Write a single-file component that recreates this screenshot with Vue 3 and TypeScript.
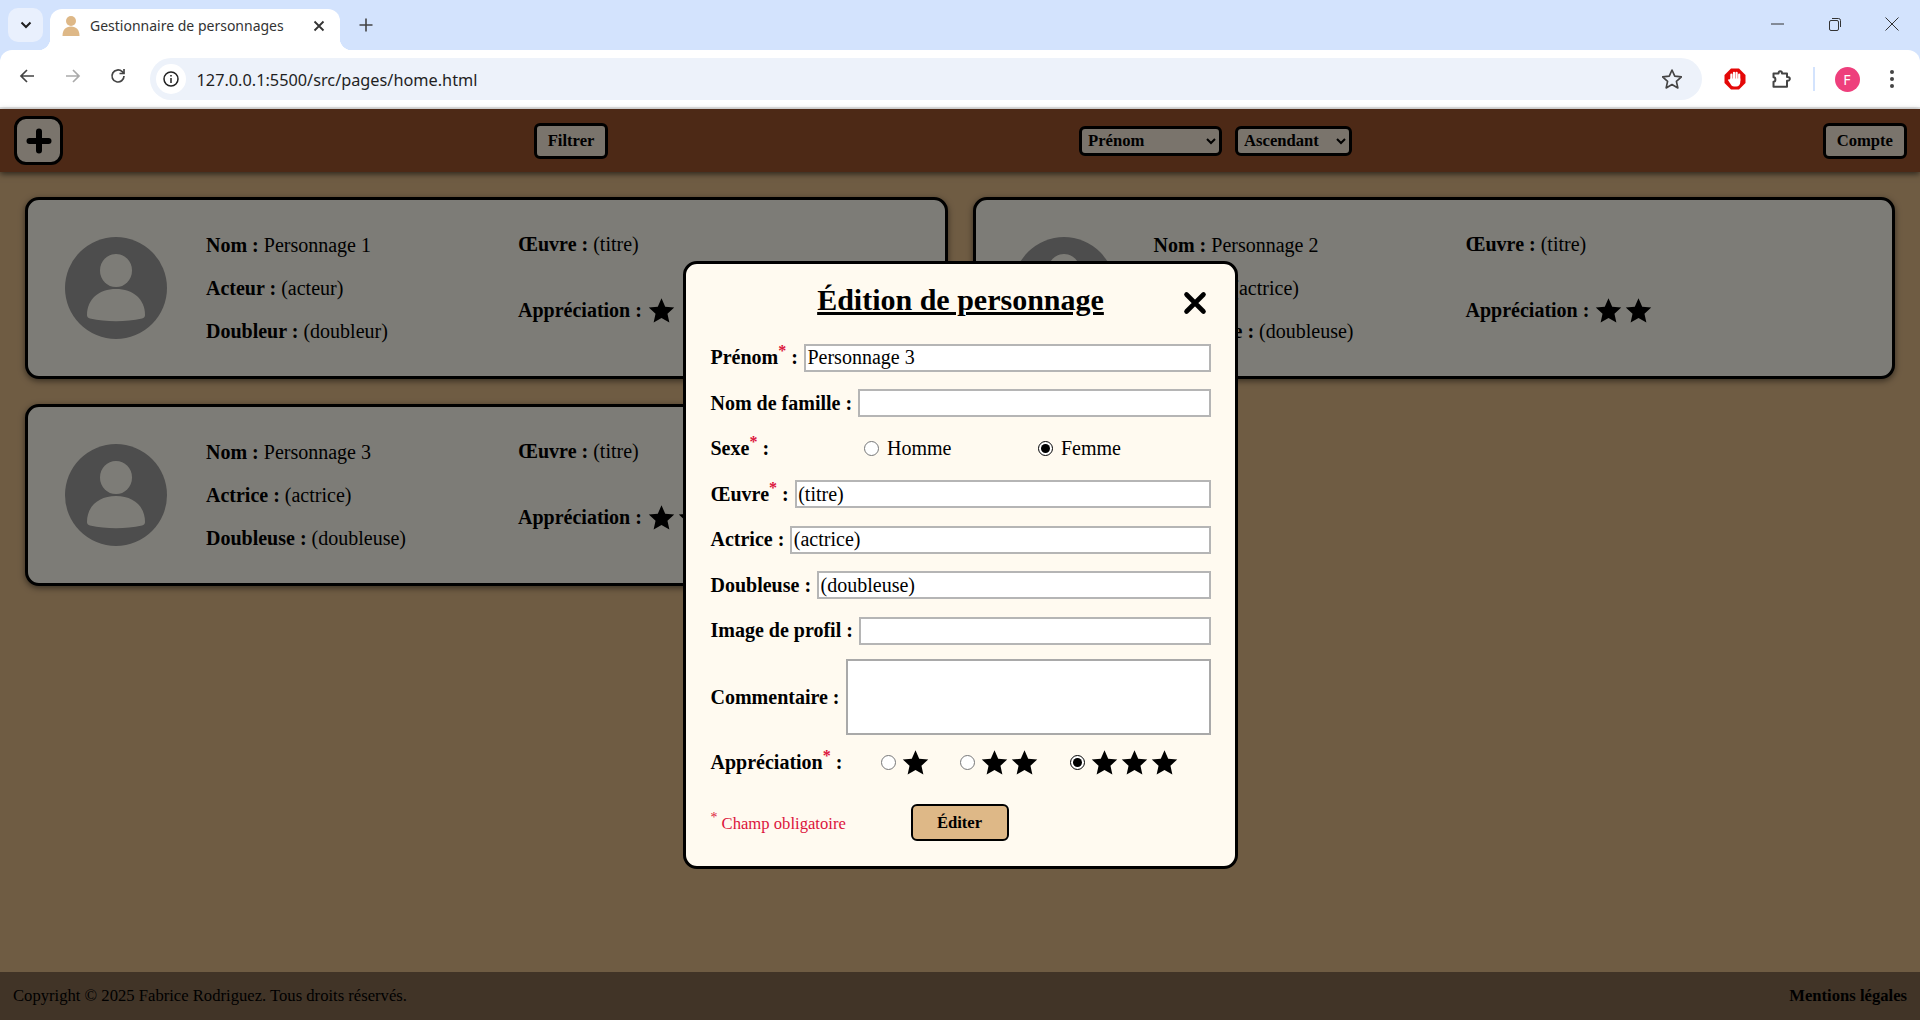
<script setup lang="ts">
interface Character {
  name: string;
  roleLabel: string;
  role: string;
  voiceLabel: string;
  voice: string;
  stars: number;
}

const characters: Character[] = [
  { name: "Personnage 1", roleLabel: "Acteur", role: "(acteur)", voiceLabel: "Doubleur", voice: "(doubleur)", stars: 1 },
  { name: "Personnage 2", roleLabel: "Actrice", role: "(actrice)", voiceLabel: "Doubleuse", voice: "(doubleuse)", stars: 2 },
  { name: "Personnage 3", roleLabel: "Actrice", role: "(actrice)", voiceLabel: "Doubleuse", voice: "(doubleuse)", stars: 2 },
];

const starPath = "M12 1.2l3.300 7.400 8 .8-6 5.400 1.700 7.900-7-4.100-7 4.100 1.700-7.900-6-5.400 8-.8z";
const ratings = [1, 2, 3];
</script>

<template>
  <div class="chrome">
    <div class="tabstrip">
      <button type="button" class="tab-search">
        <svg width="14" height="14" viewBox="0 0 14 14"><path d="M2.500 4.500 7 9l4.500-4.500" fill="none" stroke="#1f1f1f" stroke-width="2" /></svg>
      </button>
      <div class="tab">
        <svg class="favicon" width="20" height="22" viewBox="0 0 20 22">
          <circle cx="10" cy="6" r="5" fill="#deb887" />
          <path d="M1.500 21c0-6 3-9.500 8.500-9.500s8.500 3.500 8.500 9.500z" fill="#deb887" />
        </svg>
        <span class="tab-title">Gestionnaire de personnages</span>
        <svg class="tab-close" width="12" height="12" viewBox="0 0 12 12"><path d="M1.500 1.500l9 9m0-9l-9 9" stroke="#333" stroke-width="1.800" /></svg>
      </div>
      <svg class="new-tab" width="14" height="14" viewBox="0 0 14 14"><path d="M7 .5v13M.5 7h13" stroke="#444" stroke-width="1.600" /></svg>
      <div class="window-controls">
        <svg width="14" height="14" viewBox="0 0 14 14"><path d="M0 7h13" stroke="#333" stroke-width="1" /></svg>
        <svg width="14" height="14" viewBox="0 0 14 14" fill="none" stroke="#333"><rect x="1.500" y="3.500" width="9" height="10" rx="1.500" /><path d="M4 1.500h6.500a2 2 0 0 1 2 2V10" /></svg>
        <svg width="14" height="14" viewBox="0 0 14 14"><path d="M.5.500l13 13m0-13l-13 13" stroke="#333" stroke-width="1" /></svg>
      </div>
    </div>
    <div class="toolbar">
      <svg width="18" height="18" viewBox="0 0 18 18" fill="none" stroke="#444" stroke-width="1.700"><path d="M16 9H3M9 3 3 9l6 6" /></svg>
      <svg width="18" height="18" viewBox="0 0 18 18" fill="none" stroke="#aaa" stroke-width="1.700"><path d="M2 9h13M9 3l6 6-6 6" /></svg>
      <svg width="18" height="18" viewBox="0 0 18 18" fill="none" stroke="#444" stroke-width="1.700"><path d="M15 9a6 6 0 1 1-1.800-4.300L15 6.500" /><path d="M15 2v4.500h-4.500" /></svg>
      <div class="omnibox">
        <span class="site-info">
          <svg width="18" height="18" viewBox="0 0 18 18" fill="none" stroke="#222" stroke-width="1.500"><circle cx="9" cy="9" r="7" /><path d="M9 8v5M9 5v1.500" /></svg>
        </span>
        <span class="url">127.0.0.1:5500/src/pages/home.html</span>
        <svg class="bookmark" width="20" height="20" viewBox="0 0 24 24" fill="none" stroke="#444" stroke-width="2"><path :d="starPath" stroke-linejoin="round" /></svg>
      </div>
      <div class="extensions">
        <svg class="ext-block" width="22" height="22" viewBox="0 0 22 22">
          <path d="M7 .5h8L21.500 7v8L15 21.500H7L.5 15V7z" fill="#e40808" />
          <path d="M7.400 6.500v6M10 4.800v6M12.600 4.800v6M15.200 6.500v6" stroke="#fff" stroke-width="2.200" stroke-linecap="round" />
          <path d="M6.300 10.500h10v3.500c0 2.500-1.500 4.500-4 4.500H10c-1.500 0-2.500-.8-3.300-2.200L4.200 12.500c-.5-1 .8-1.800 1.500-1z" fill="#fff" />
        </svg>
        <svg class="ext-puzzle" width="22" height="22" viewBox="0 0 22 22" fill="none" stroke="#444" stroke-width="2" stroke-linejoin="round"><path d="M3.500 5.500h5c0-3 3.500-3 3.500 0h5V9c2.500-.5 3 1.500 2.700 2.500-.3 1-1.200 1.500-2.700 1.300v6H3.500v-5c2.500 0 2.500-4.500 0-4.500z" /></svg>
        <span class="divider"></span>
        <span class="profile">F</span>
        <svg class="ext-menu" width="6" height="20" viewBox="0 0 6 20" fill="#444"><circle cx="3" cy="3" r="2" /><circle cx="3" cy="10" r="2" /><circle cx="3" cy="17" r="2" /></svg>
      </div>
    </div>
  </div>

  <div class="page">
    <header class="app-header">
      <button type="button" class="add-btn" aria-label="Ajouter">
        <svg width="30" height="30" viewBox="0 0 30 30"><path d="M15 5.500v19M5.500 15h19" stroke="#000" stroke-width="6" stroke-linecap="round" /></svg>
      </button>
      <button type="button" class="btn">Filtrer</button>
      <div class="sorters">
        <select class="sort sort-name">
          <option>Prénom</option>
        </select>
        <select class="sort sort-order">
          <option>Ascendant</option>
        </select>
      </div>
      <button type="button" class="btn">Compte</button>
    </header>

    <main class="cards">
      <article v-for="c in characters" :key="c.name" class="card">
        <svg class="avatar" width="102" height="102" viewBox="0 0 102 102">
          <circle cx="51" cy="51" r="51" fill="#9a9a9a" />
          <ellipse cx="51" cy="33.500" rx="16" ry="16.500" fill="#fbf9ee" />
          <path d="M22 78C22 62 34 52 51 52s29 10 29 26c0 2-1 3-3 3.500-17 3.500-35 3.500-52 0-2-.5-3-1.500-3-3.500z" fill="#fbf9ee" />
        </svg>
        <div class="col col-identity">
          <p><b>Nom :</b> {{ c.name }}</p>
          <p><b>{{ c.roleLabel }} :</b> {{ c.role }}</p>
          <p><b>{{ c.voiceLabel }} :</b> {{ c.voice }}</p>
        </div>
        <div class="col col-work">
          <p><b>Œuvre :</b> (titre)</p>
          <p class="rating">
            <b>Appréciation :</b>
            <svg v-for="n in c.stars" :key="n" class="star" width="27" height="27" viewBox="0 0 24 24"><path :d="starPath" /></svg>
          </p>
        </div>
      </article>
    </main>

    <footer class="app-footer">
      <span>Copyright © 2025 Fabrice Rodriguez. Tous droits réservés.</span>
      <b>Mentions légales</b>
    </footer>

    <div class="overlay">
      <form class="modal" @submit.prevent>
        <div class="modal-head">
          <h2>Édition de personnage</h2>
          <svg class="close" width="24" height="24" viewBox="0 0 24 24"><path d="M3.500 3.500l17 17m0-17l-17 17" stroke="#000" stroke-width="4.600" stroke-linecap="round" /></svg>
        </div>

        <label class="row">
          <b>Prénom<sup>*</sup> :</b>
          <input type="text" value="Personnage 3" />
        </label>
        <label class="row">
          <b>Nom de famille :</b>
          <input type="text" />
        </label>
        <div class="row row-radio">
          <b class="sex-label">Sexe<sup>*</sup> :</b>
          <label class="radio sex-m"><input type="radio" name="sex" /> Homme</label>
          <label class="radio"><input type="radio" name="sex" checked /> Femme</label>
        </div>
        <label class="row">
          <b>Œuvre<sup>*</sup> :</b>
          <input type="text" value="(titre)" />
        </label>
        <label class="row">
          <b>Actrice :</b>
          <input type="text" value="(actrice)" />
        </label>
        <label class="row">
          <b>Doubleuse :</b>
          <input type="text" value="(doubleuse)" />
        </label>
        <label class="row">
          <b>Image de profil :</b>
          <input type="text" />
        </label>
        <label class="row row-area">
          <b>Commentaire :</b>
          <textarea></textarea>
        </label>
        <div class="row row-stars">
          <b class="rate-label">Appréciation<sup>*</sup> :</b>
          <label v-for="r in ratings" :key="r" class="radio rate">
            <input type="radio" name="rate" :checked="r === 3" />
            <svg v-for="n in r" :key="n" class="star" width="27" height="27" viewBox="0 0 24 24"><path :d="starPath" /></svg>
          </label>
        </div>
        <div class="modal-foot">
          <span class="required"><sup>*</sup> Champ obligatoire</span>
          <button type="submit" class="submit">Éditer</button>
        </div>
      </form>
    </div>
  </div>
</template>

<style>
html,
body {
  margin: 0;
  height: 100%;
  overflow: hidden;
}
</style>

<style scoped>
.chrome {
  height: 109px;
  display: flex;
  flex-direction: column;
  font-family: "Noto Sans", sans-serif;
  background: #d3e3fd;
}

.tabstrip {
  height: 50px;
  display: flex;
  align-items: flex-end;
  padding-left: 8px;
}

.tab-search {
  width: 35px;
  height: 34px;
  margin-bottom: 8px;
  padding: 0;
  display: flex;
  align-items: center;
  justify-content: center;
  border: 0;
  border-radius: 10px;
  background: #e9f0fd;
}

.tab {
  position: relative;
  width: 290px;
  height: 41px;
  margin-left: 7px;
  padding: 0 15px 8px 11px;
  box-sizing: border-box;
  display: flex;
  align-items: center;
  border-radius: 12px 12px 0 0;
  background: #fff;
}

.tab::before,
.tab::after {
  content: "";
  position: absolute;
  bottom: 0;
  width: 12px;
  height: 12px;
}

.tab::before {
  left: -12px;
  background: radial-gradient(circle at 0 0, transparent 12px, #fff 12.500px);
}

.tab::after {
  right: -12px;
  background: radial-gradient(circle at 100% 0, transparent 12px, #fff 12.500px);
}

.favicon {
  flex: none;
}

.tab-title {
  flex: 1;
  margin-left: 9px;
  color: #333;
  font-size: 14px;
  white-space: nowrap;
}

.tab-close {
  flex: none;
}

.new-tab {
  margin: 0 0 18px 19px;
}

.window-controls {
  margin-left: auto;
  margin-bottom: 19px;
  padding-right: 21px;
  display: flex;
  gap: 43px;
}

.toolbar {
  position: relative;
  height: 59px;
  box-sizing: border-box;
  padding: 8px 0 7px 18px;
  display: flex;
  align-items: flex-start;
  gap: 27.500px;
  border-bottom: 2px solid #e8e8e8;
  border-radius: 12px 12px 0 0;
  background: #fff;
}

.toolbar > svg {
  margin-top: 9px;
}

.omnibox {
  width: 1552px;
  height: 42px;
  margin-left: -5px;
  padding: 0 20px 0 6px;
  box-sizing: border-box;
  display: flex;
  align-items: center;
  border-radius: 21px;
  background: #edf2fa;
}

.site-info {
  width: 30px;
  height: 30px;
  display: flex;
  align-items: center;
  justify-content: center;
  border-radius: 50%;
  background: #fff;
}

.url {
  margin-left: 11px;
  padding-top: 1px;
  color: #1f1f1f;
  font-size: 16.300px;
}

.bookmark {
  margin-left: auto;
}

.extensions {
  margin-left: -5.500px;
  display: flex;
  align-items: center;
  height: 42px;
}

.ext-puzzle {
  margin-left: 24px;
}

.divider {
  width: 2px;
  height: 24px;
  margin: 0 20px 0 21px;
  background: #d3e3fd;
}

.profile {
  width: 25px;
  height: 25px;
  display: flex;
  align-items: center;
  justify-content: center;
  border-radius: 50%;
  background: #ee3f7c;
  color: #fff;
  font-size: 14px;
}

.ext-menu {
  margin-left: 29px;
}

.page {
  position: relative;
  height: 911px;
  display: flex;
  flex-direction: column;
  background: #deb887;
  font-family: "Liberation Serif", serif;
  color: #000;
  font-size: 20px;
}

.app-header {
  height: 63px;
  flex: none;
  box-sizing: border-box;
  padding: 0 13px 0 14px;
  display: flex;
  align-items: center;
  justify-content: space-between;
  background: #9b532c;
  box-shadow: 0 2px 6px rgba(0, 0, 0, 0.6);
}

.add-btn {
  width: 49px;
  height: 49px;
  padding: 0;
  display: flex;
  align-items: center;
  justify-content: center;
  border: 3px solid #000;
  border-radius: 12px;
  background: #f4e8d8;
}

.btn {
  height: 36px;
  padding: 0 11px;
  border: 3px solid #000;
  border-radius: 6px;
  background: #f4e8d8;
  font: bold 16.640px "Liberation Serif", serif;
}

.sorters {
  display: flex;
  gap: 13px;
}

.sort {
  height: 30px;
  padding: 0 3px 0 2px;
  border: 3px solid #000;
  border-radius: 6px;
  background: #f4e8d8;
  font: bold 16.640px "Liberation Serif", serif;
}

.sort-name {
  width: 143px;
}

.sort-order {
  width: 117px;
}

.cards {
  flex: 1;
  padding: 25px 25px 0;
  display: grid;
  grid-template-columns: repeat(2, 1fr);
  grid-auto-rows: 182px;
  align-content: start;
  column-gap: 25px;
  row-gap: 25px;
}

.card {
  box-sizing: border-box;
  padding-left: 37px;
  display: flex;
  align-items: center;
  border: 3px solid #000;
  border-radius: 14px;
  background: #fbf9ee;
  box-shadow: 0 2px 6px rgba(0, 0, 0, 0.5);
}

.avatar {
  flex: none;
}

.col p {
  margin: 0;
}

.col-identity {
  width: 312px;
  margin-left: 39px;
  display: flex;
  flex-direction: column;
  gap: 20px;
}

.col-identity p,
.col-work > p:first-child {
  line-height: 23px;
}

.col-work {
  display: flex;
  flex-direction: column;
  gap: 39px;
  margin-bottom: 18px;
}

.rating {
  display: flex;
  align-items: center;
  gap: 3px;
  height: 30px;
}

.rating b {
  margin-right: 3px;
}

.star {
  display: block;
  flex: none;
}

.app-footer {
  height: 48px;
  flex: none;
  box-sizing: border-box;
  padding: 0 13px;
  display: flex;
  align-items: center;
  justify-content: space-between;
  background: #82684f;
  font-size: 16.640px;
}

.overlay {
  position: absolute;
  inset: 0;
  display: flex;
  align-items: center;
  justify-content: center;
  background: rgba(0, 0, 0, 0.5);
}

.modal {
  width: 555px;
  box-sizing: border-box;
  padding: 15px 24px 25px 25px;
  display: flex;
  flex-direction: column;
  border: 3px solid #000;
  border-radius: 14px;
  background: #fffaf0;
}

.modal-head {
  position: relative;
  height: 65px;
  text-align: center;
}

.modal-head h2 {
  margin: 1px 0 0;
  font-size: 30px;
  line-height: 40px;
  text-decoration: underline;
}

.close {
  position: absolute;
  top: 12px;
  right: 3.500px;
}

.row {
  height: 28px;
  margin-bottom: 17.500px;
  display: flex;
  align-items: center;
  gap: 6px;
}

.row b {
  white-space: nowrap;
}

.row sup {
  color: #dc143c;
  font-size: 16px;
  line-height: 0;
}

.row > input {
  flex: 1;
  min-width: 0;
  height: 28px;
  box-sizing: border-box;
  padding: 1px 1.500px;
  border: 2px solid #b5b5b5;
  background: #fff;
  font: 20px "Liberation Serif", serif;
}

.row-area {
  height: 76px;
  margin-top: -3.500px;
  margin-bottom: 10px;
}

.row-area b {
  padding-top: 2px;
}

textarea {
  flex: 1;
  height: 76px;
  box-sizing: border-box;
  border: 2px solid #a9a9a9;
  background: #fff;
  resize: none;
}

.radio {
  display: flex;
  align-items: center;
  gap: 4px;
}

.radio input {
  width: 15px;
  height: 15px;
  margin: 0 4px 0 0;
  accent-color: #000;
}

.sex-label {
  width: 147.500px;
}

.sex-m {
  width: 168px;
}

.row-stars {
  height: 36px;
  margin-bottom: 24px;
  gap: 0;
}

.rate-label {
  width: 170px;
}

.rate {
  gap: 3px;
  margin-right: 31.500px;
}

.rate input {
  margin-right: 3px;
}

.modal-foot {
  height: 36px;
  display: flex;
  align-items: center;
}

.required {
  width: 200px;
  padding-top: 3px;
  color: #dc143c;
  font-size: 16.640px;
}

.required sup {
  line-height: 0;
}

.submit {
  width: 98px;
  height: 37px;
  padding: 0;
  flex: none;
  border: 2px solid #000;
  border-radius: 6px;
  background: #deb887;
  font: bold 16.640px "Liberation Serif", serif;
}
</style>
